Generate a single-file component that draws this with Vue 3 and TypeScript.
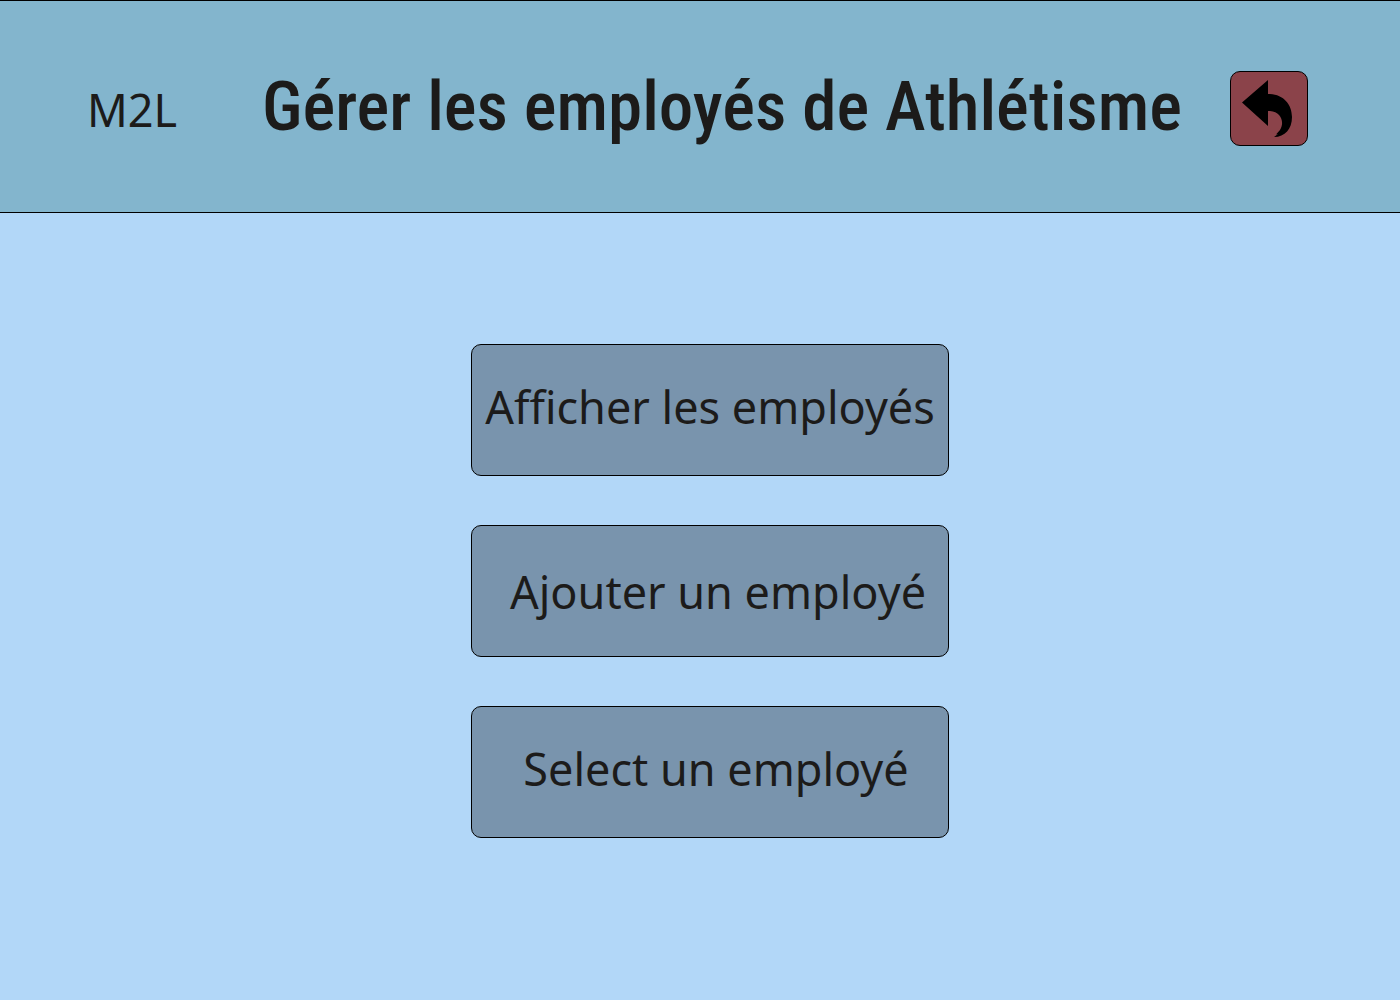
<script setup lang="ts">
interface Action {
  label: string
  variant: string
}

const actions: Action[] = [
  { label: 'Afficher les employés', variant: 'list' },
  { label: 'Ajouter un employé', variant: 'add' },
  { label: 'Select un employé', variant: 'select' },
]
</script>

<template>
  <div class="page">
    <header class="header">
      <span class="brand">M2L</span>
      <h1 class="title">Gérer les employés de Athlétisme</h1>
      <button class="back" type="button" aria-label="Retour">
        <svg class="back-icon" viewBox="0 0 50 58" aria-hidden="true">
          <path d="M0 22.500 26 0V14C41 14 50 24 50 37C50 49 43 57 32 57L36 54L34 54.500L38 50C43 42 39 31 26 31V46Z" />
        </svg>
      </button>
    </header>
    <main class="menu">
      <button
        v-for="action in actions"
        :key="action.label"
        class="action"
        :class="action.variant"
        type="button"
      >
        {{ action.label }}
      </button>
    </main>
  </div>
</template>

<style>
body {
  margin: 0;
  background: #b2d7f8;
}
</style>

<style scoped>
.page {
  min-height: 100vh;
  background: #b2d7f8;
  color: #1c1b1a;
  font-family: "Noto Sans", "Open Sans", sans-serif;
}

.header {
  display: flex;
  align-items: center;
  box-sizing: border-box;
  height: 213px;
  padding: 4px 92px 0 87px;
  border-top: 1px solid #000;
  border-bottom: 1px solid #000;
  background: #83b5cd;
}

.brand {
  padding-top: 2px;
  font-size: 45px;
}

.title {
  margin: 0 48px 0 auto;
  padding-bottom: 4px;
  font-family: "Roboto Condensed", "Liberation Sans Narrow", sans-serif;
  font-size: 69px;
  font-weight: 500;
  white-space: nowrap;
}

.back {
  display: flex;
  align-items: center;
  justify-content: center;
  flex: none;
  width: 78px;
  height: 75px;
  padding: 0 4px 0 0;
  border: 1px solid #000;
  border-radius: 10px;
  background: #8b434a;
}

.back-icon {
  width: 50px;
  height: 58px;
}

.menu {
  display: flex;
  flex-direction: column;
  align-items: center;
  gap: 49px;
  padding: 131px 0 48px 20px;
}

.action {
  box-sizing: border-box;
  width: 478px;
  height: 132px;
  padding: 0 0 8px;
  border: 1px solid #000;
  border-radius: 10px;
  background: #7994ad;
  color: inherit;
  font-family: inherit;
  font-size: 45px;
  white-space: nowrap;
}

.add {
  padding: 0 0 0 16px;
}

.select {
  padding-left: 12px;
}
</style>
